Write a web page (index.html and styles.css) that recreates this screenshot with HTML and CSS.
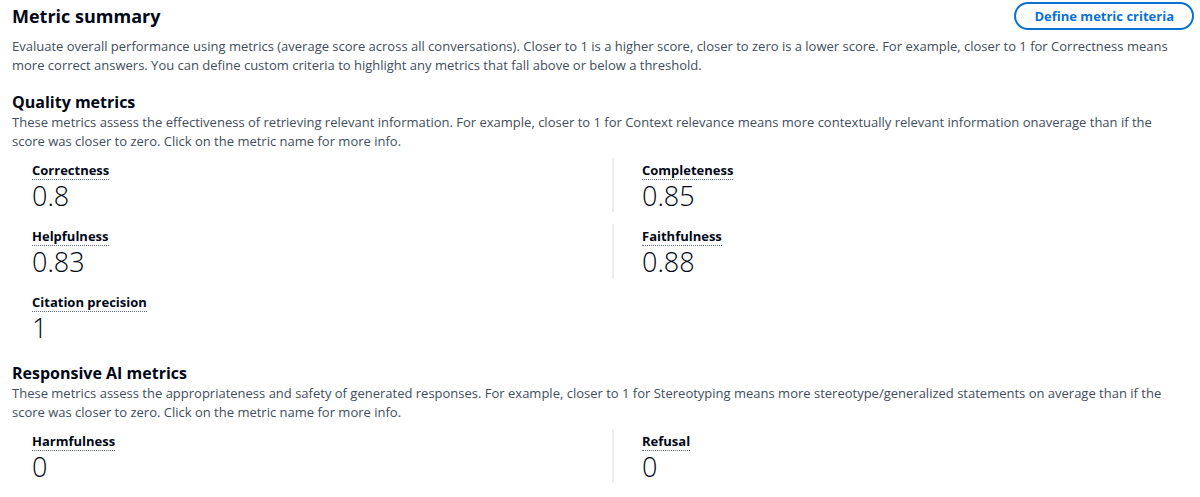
FILE: index.html
```html
<!DOCTYPE html>
<html>
<head>
<meta charset="utf-8">
<link rel="stylesheet" href="styles.css">
</head>
<body>
<div class="page">
  <div class="header">
    <h2 class="title">Metric summary</h2>
    <button class="btn">Define metric criteria</button>
  </div>
  <p class="desc">Evaluate overall performance using metrics (average score across all conversations). Closer to 1 is a higher score, closer to zero is a lower score. For example, closer to 1 for Correctness means more correct answers. You can define custom criteria to highlight any metrics that fall above or below a threshold.</p>

  <h3 class="subtitle">Quality metrics</h3>
  <p class="desc tight">These metrics assess the effectiveness of retrieving relevant information. For example, closer to 1 for Context relevance means more contextually relevant information onaverage than if the score was closer to zero. Click on the metric name for more info.</p>
  <div class="grid">
    <div class="cell"><span class="label">Correctness</span><div class="value">0.8</div></div>
    <div class="cell divided"><span class="label">Completeness</span><div class="value">0.85</div></div>
    <div class="cell"><span class="label">Helpfulness</span><div class="value">0.83</div></div>
    <div class="cell divided"><span class="label">Faithfulness</span><div class="value">0.88</div></div>
    <div class="cell"><span class="label">Citation precision</span><div class="value">1</div></div>
  </div>

  <h3 class="subtitle">Responsive AI metrics</h3>
  <p class="desc tight">These metrics assess the appropriateness and safety of generated responses. For example, closer to 1 for Stereotyping means more stereotype/generalized statements on average than if the score was closer to zero. Click on the metric name for more info.</p>
  <div class="grid">
    <div class="cell"><span class="label">Harmfulness</span><div class="value">0</div></div>
    <div class="cell divided"><span class="label">Refusal</span><div class="value">0</div></div>
  </div>
</div>
</body>
</html>
```

FILE: styles.css
```css
* { box-sizing: border-box; }
html, body { margin: 0; padding: 0; background: #ffffff; }
body {
  font-family: "Open Sans", "Noto Sans", sans-serif;
  color: #000716;
}
.page { padding: 0 12px; width: 1200px; }
.header {
  display: flex;
  justify-content: space-between;
  align-items: center;
  height: 31px;
}
.title {
  margin: 0;
  font-size: 18px;
  font-weight: 700;
  line-height: 24px;
}
.btn {
  font-family: inherit;
  font-size: 13px;
  font-weight: 700;
  color: #0972d3;
  background: #fff;
  border: 2px solid #0972d3;
  border-radius: 20px;
  height: 28px;
  padding: 0 18px;
  margin-right: -6px;
}
.desc {
  margin: 6px 0 0;
  font-size: 13px;
  line-height: 19px;
  color: #414d5c;
}
.desc.tight { margin-top: 0; }
.subtitle {
  margin: 16px 0 0;
  font-size: 16px;
  font-weight: 700;
  line-height: 22px;
}
.grid {
  display: grid;
  grid-template-columns: 600px 1fr;
  row-gap: 12px;
  margin-top: 7px;
  margin-bottom: 18px;
}
.cell { padding-left: 20px; }
.cell.divided { border-left: 2px solid #e9ebed; padding-left: 28px; }
.label {
  font-size: 13px;
  font-weight: 700;
  line-height: 18px;
  border-bottom: 1px dotted #5f6b7a;
}
.value {
  font-size: 27px;
  font-weight: 300;
  line-height: 32px;
  margin-top: 0;
}
```
